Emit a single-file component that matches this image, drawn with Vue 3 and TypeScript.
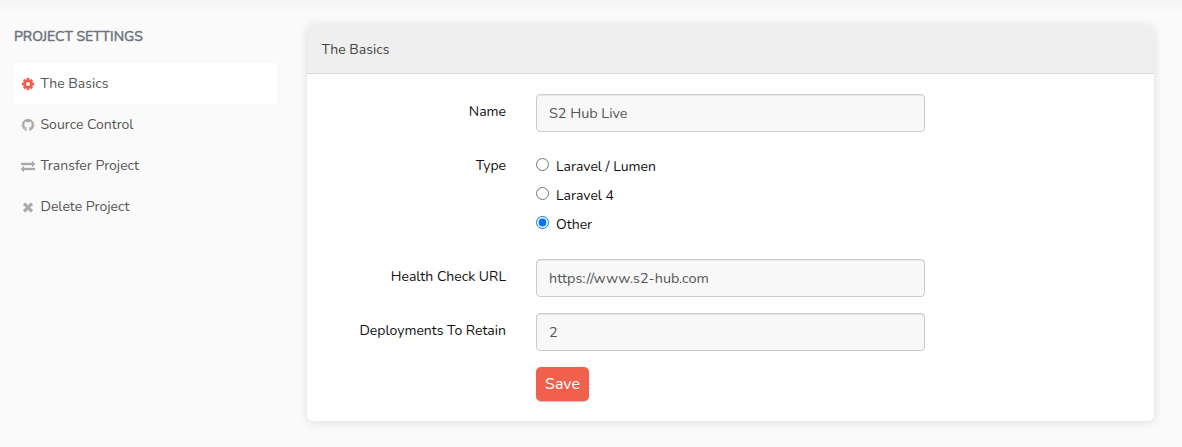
<script setup lang="ts">
import { ref } from 'vue'

interface NavItem {
  label: string
  key: string
  box: string
  icon: string
}

const navItems: NavItem[] = [
  {
    label: 'The Basics',
    key: 'basics',
    box: '-128 0 1792 1792',
    icon: 'M1024 896q0-106-75-181t-181-75-181 75-75 181 75 181 181 75 181-75 75-181zm512-109v222q0 12-8 23t-20 13l-185 28q-19 54-39 91 35 50 107 138 10 12 10 25t-9 23q-27 37-99 108t-94 71q-12 0-26-9l-138-108q-44 23-91 38-16 136-29 186-7 28-36 28h-222q-14 0-24.5-8.5t-11.5-21.5l-28-184q-49-16-90-37l-141 107q-10 9-25 9-14 0-25-11-126-114-165-168-7-10-7-23 0-12 8-23 15-21 51-66.5t54-70.5q-27-50-41-99l-183-27q-13-2-21-12.5t-8-23.5v-222q0-12 8-23t19-13l186-28q14-46 39-92-40-57-107-138-10-12-10-24 0-10 9-23 26-36 98.500-107.500t94.500-71.500q13 0 26 10l138 107q44-23 91-38 16-136 29-186 7-28 36-28h222q14 0 24.500 8.500t11.500 21.500l28 184q49 16 90 37l142-107q9-9 24-9 13 0 25 10 129 119 165 170 7 8 7 22 0 12-8 23-15 21-51 66.500t-54 70.500q26 50 41 98l183 28q13 2 21 12.500t8 23.500z',
  },
  {
    label: 'Source Control',
    key: 'source',
    box: '0 0 1792 1792',
    icon: 'M896 128q209 0 385.500 103t279.500 279.500 103 385.500q0 251-146.500 451.500t-378.500 277.500q-27 5-40-7t-13-30q0-3 .5-76.500t.5-134.500q0-97-52-142 57-6 102.500-18t94-39 81-66.500 53-105 20.500-150.500q0-119-79-206 37-91-8-204-28-9-81 11t-92 44l-38 24q-93-26-192-26t-192 26q-16-11-42.500-27t-83.500-38.500-85-13.500q-45 113-8 204-79 87-79 206 0 85 20.500 150t52.500 105 80.500 67 94 39 102.500 18q-39 36-49 103-21 10-45 15t-57 5-65.500-21.500-55.500-62.500q-19-32-48.500-52t-49.500-24l-20-3q-21 0-29 4.500t-5 11.500 9 14 13 12l7 5q22 10 43.500 38t31.500 51l10 23q13 38 44 61.500t67 30 69.500 7 55.500-3.500l23-4q0 38 .5 88.500t.5 54.500q0 18-13 30t-40 7q-232-77-378.500-277.500t-146.500-451.500q0-209 103-385.500t279.500-279.500 385.500-103z',
  },
  {
    label: 'Transfer Project',
    key: 'transfer',
    box: '0 0 1792 1792',
    icon: 'M1792 1184v192q0 13-9.500 22.500t-22.500 9.500h-1376v192q0 13-9.500 22.500t-22.500 9.500q-12 0-24-10l-319-320q-9-9-9-22 0-14 9-23l320-320q9-9 23-9 13 0 22.500 9.500t9.500 22.500v192h1376q13 0 22.500 9.500t9.500 22.500zm0-544q0 14-9 23l-320 320q-9 9-23 9-13 0-22.500-9.500t-9.500-22.500v-192h-1376q-13 0-22.500-9.500t-9.500-22.500v-192q0-13 9.500-22.500t22.500-9.500h1376v-192q0-14 9-23t23-9q12 0 24 10l319 319q9 9 9 23z',
  },
  {
    label: 'Delete Project',
    key: 'delete',
    box: '0 0 1792 1792',
    icon: 'M1490 1322q0 40-28 68l-136 136q-28 28-68 28t-68-28l-294-294-294 294q-28 28-68 28t-68-28l-136-136q-28-28-28-68t28-68l294-294-294-294q-28-28-28-68t28-68l136-136q28-28 68-28t68 28l294 294 294-294q28-28 68-28t68 28l136 136q28 28 28 68t-28 68l-294 294 294 294q28 28 28 68z',
  },
]

const active = ref('basics')
const types = ['Laravel / Lumen', 'Laravel 4', 'Other']
const type = ref('Other')
const name = ref('S2 Hub Live')
const url = ref('https://www.s2-hub.com')
const retain = ref('2')
</script>

<template>
  <div class="page">
    <aside class="sidebar">
      <h2 class="title">PROJECT SETTINGS</h2>
      <nav>
        <a
          v-for="item in navItems"
          :key="item.key"
          class="nav-item"
          :class="{ active: active === item.key }"
          @click="active = item.key"
        >
          <svg class="icon" :viewBox="item.box"><path :d="item.icon" /></svg>
          <span>{{ item.label }}</span>
        </a>
      </nav>
    </aside>

    <main class="card">
      <header class="card-header"><span>The Basics</span></header>
      <form class="card-body" @submit.prevent>
        <div class="row">
          <label class="label" for="name">Name</label>
          <input id="name" v-model="name" class="input" type="text" />
        </div>
        <div class="row types">
          <span class="label">Type</span>
          <div class="radios">
            <label v-for="t in types" :key="t" class="radio">
              <input v-model="type" type="radio" name="type" :value="t" />
              <span>{{ t }}</span>
            </label>
          </div>
        </div>
        <div class="row">
          <label class="label" for="url">Health Check URL</label>
          <input id="url" v-model="url" class="input" type="text" />
        </div>
        <div class="row">
          <label class="label" for="retain">Deployments To Retain</label>
          <input id="retain" v-model="retain" class="input" type="text" />
        </div>
        <button class="save" type="submit">Save</button>
      </form>
    </main>
  </div>
</template>

<style>
body {
  background: #fafafa;
}
</style>

<style scoped>
.page {
  box-sizing: border-box;
  height: 447px;
  display: flex;
  align-items: flex-start;
  gap: 30px;
  padding: 25px 28px 0 14px;
  overflow: hidden;
  background: linear-gradient(#f6f6f6, #fafafa 16px);
  font: 14px/22px Nunito, Lato, 'Open Sans', sans-serif;
  color: #111;
}
.sidebar {
  width: 263px;
  flex: none;
}
.title {
  margin: 0 0 15px;
  padding-top: 1px;
  font-size: 14px;
  font-weight: 400;
  line-height: 22px;
  color: #6c757d;
  -webkit-text-stroke: 0.5px #6c757d;
}
.nav-item {
  display: flex;
  align-items: center;
  height: 41px;
  padding-left: 7px;
  gap: 5.5px;
  color: #555;
  cursor: pointer;
}
.icon {
  width: 14px;
  height: 14px;
  fill: #aaa;
  stroke: #aaa;
  stroke-width: 40;
}
.nav-item.active {
  background: #fff;
}
.active .icon {
  fill: #f35d4f;
  stroke: #f35d4f;
}
.card {
  flex: 1;
  height: 396px;
  border-radius: 6px;
  background: #fff;
  box-shadow: 0 1px 10px rgba(0, 0, 0, 0.12);
  overflow: hidden;
}
.card-header {
  box-sizing: border-box;
  height: 49px;
  padding: 14px 14.5px 12px;
  background: #efefef;
  border-bottom: 1px solid #d9d9d9;
  color: #444;
}
.card-body {
  padding-top: 20px;
}
.row {
  display: flex;
  margin-bottom: 16px;
}
.label {
  width: 199px;
  margin-right: 30px;
  padding-top: 7px;
  text-align: right;
}
.input {
  box-sizing: border-box;
  width: 389px;
  height: 38px;
  padding: 0 12px;
  border: 1px solid #ccc;
  border-radius: 4px;
  background: #f8f8f8;
  box-shadow: inset 0 1px 1px rgba(0, 0, 0, 0.075);
  font: inherit;
  font-size: 14.400px;
  color: #555;
  outline: none;
}
.types {
  height: 95px;
}
.radios {
  padding-top: 7px;
}
.radio {
  display: flex;
  align-items: flex-start;
  height: 29px;
  padding-top: 1px;
  box-sizing: border-box;
}
.radio input {
  width: 13px;
  height: 13px;
  margin: 2px 7px 0 0;
}
.save {
  display: block;
  width: 53px;
  height: 34px;
  margin-left: 229px;
  padding: 0;
  border: 0;
  border-radius: 5px;
  background: #f0604d;
  box-shadow: 0 1px 1px rgba(0, 0, 0, 0.25);
  color: #fff;
  font: inherit;
  font-size: 16px;
}
</style>
